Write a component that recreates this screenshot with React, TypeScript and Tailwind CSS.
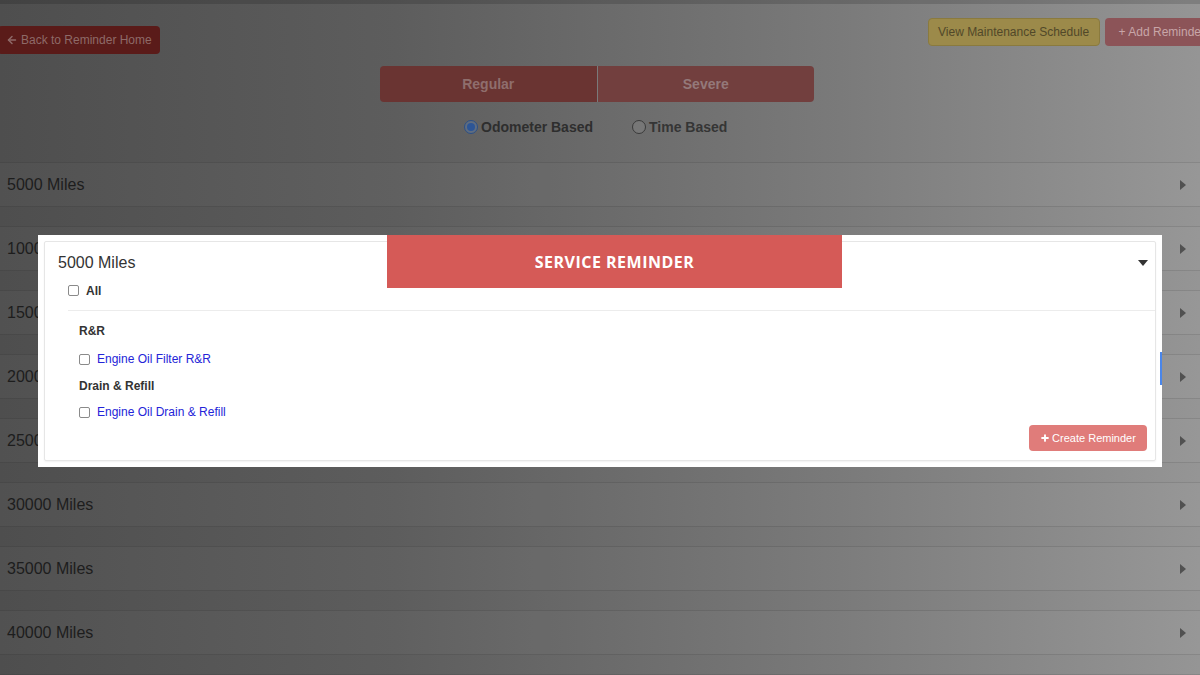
import { ArrowLeft, Plus } from "lucide-react"

const rows = ["5000", "10000", "15000", "20000", "25000", "30000", "35000", "40000"]

function Box({ className = "" }: { className?: string }) {
  return <span className={`inline-block w-[11px] h-[11px] rounded-[2px] border border-[#8a8a8a] bg-white ${className}`} />
}

function CaretRight() {
  return (
    <svg width="6" height="10" viewBox="0 0 6 10">
      <path d="M0 0 L6 5 L0 10 Z" fill="#3a3a3a" fillOpacity="0.75" />
    </svg>
  )
}

export default function App() {
  return (
    <div className="relative w-[1200px] h-[675px] overflow-hidden bg-[linear-gradient(90deg,#4e4e4e_0%,#5d5d5d_33%,#7a7a7a_70%,#959595_100%)] font-['Liberation_Sans',Arial,sans-serif]">
      {/* dimmed page behind the modal */}
      <div className="h-[4px] bg-black/15" />
      <div className="flex items-start justify-between pt-[14px]">
        <button className="mt-[8px] ml-[-2px] h-[28px] px-[8px] flex items-center gap-[3px] rounded-[4px] bg-[#5a1b19] text-[12px] text-[#8e6a68]">
          <ArrowLeft size={12} strokeWidth={3} />
          Back to Reminder Home
        </button>
        <div className="flex gap-[5px] mr-[-19px]">
          <button className="h-[28px] w-[172px] rounded-[4px] border border-[#8a7a3e] bg-[#9c8a4a] text-[12px] text-[#514829]">
            View Maintenance Schedule
          </button>
          <button className="h-[28px] px-[14px] rounded-[4px] bg-[#8c5458] text-[12px] text-[#c8a6a8]">
            + Add Reminder
          </button>
        </div>
      </div>

      <div className="ml-[380px] mt-[12px] flex w-[434px] h-[36px] rounded-[4px] overflow-hidden">
        <div className="flex-1 flex items-center justify-center bg-[#6a3432] text-[14px] font-bold text-[#8f6e6d]">
          Regular
        </div>
        <div className="w-[1px] bg-[#7a7a7a]" />
        <div className="flex-1 flex items-center justify-center bg-[#723f3e] text-[14px] font-bold text-[#94797a]">
          Severe
        </div>
      </div>

      <div className="mt-[15px] h-[20px] flex items-center ml-[464px] text-[14px] font-bold text-[#2e2e2e]">
        <span className="w-[14px] h-[14px] rounded-full border border-[#2c4f86] bg-[#5f6d80] flex items-center justify-center">
          <span className="w-[8px] h-[8px] rounded-full bg-[#2c5596]" />
        </span>
        <span className="ml-[3px]">Odometer Based</span>
        <span className="ml-[39px] w-[14px] h-[14px] rounded-full border border-[#3a3a3a] bg-[#777]" />
        <span className="ml-[3px] text-[#353535]">Time Based</span>
      </div>

      <div className="mt-[25px] flex flex-col gap-[19px]">
        {rows.map((r) => (
          <div
            key={r}
            className="h-[45px] flex items-center justify-between pl-[7px] pr-[14px] border-y border-black/10 bg-white/[0.02] text-[16px] text-[#1d1d1d]">
            <span>{r} Miles</span>
            <CaretRight />
          </div>
        ))}
        <div className="h-[45px] border-y border-black/10 bg-white/[0.02]" />
      </div>

      {/* modal */}
      <div className="absolute left-[38px] top-[235px] w-[1124px] h-[232px] bg-white p-[6px]">
        <div className="h-full rounded-[2px] border border-[#e6e6e6] shadow-[0_1px_2px_rgba(0,0,0,0.06)]">
          <div className="flex items-center justify-between pl-[13px] pr-[7px] pt-[10px] h-[31px]">
            <span className="text-[16px] text-[#333]">5000 Miles</span>
            <svg width="10" height="6" viewBox="0 0 10 6">
              <path d="M0 0 H10 L5 6 Z" fill="#333" />
            </svg>
          </div>
          <div className="ml-[23px] mt-[7px] h-[21px] flex items-center gap-[7px] text-[12px] font-bold text-[#333]">
            <Box />
            All
          </div>
          <div className="ml-[23px] mt-[9px] border-t border-[#ececec]" />
          <div className="ml-[34px] pt-[13px] text-[12px] text-[#333]">
            <div className="h-[14px] font-bold leading-[14px]">R&amp;R</div>
            <div className="mt-[14px] h-[14px] flex items-center gap-[7px]">
              <Box />
              <span className="text-[#2424d8]">Engine Oil Filter R&amp;R</span>
            </div>
            <div className="mt-[13px] h-[14px] font-bold leading-[14px]">Drain &amp; Refill</div>
            <div className="mt-[12px] h-[14px] flex items-center gap-[7px]">
              <Box />
              <span className="text-[#2424d8]">Engine Oil Drain &amp; Refill</span>
            </div>
          </div>
          <div className="flex justify-end pr-[8px] mt-[6px]">
            <button className="h-[26px] w-[118px] rounded-[4px] bg-[#e07c7a] flex items-center justify-center gap-[2px] text-[11px] text-white">
              <Plus size={10} strokeWidth={4.5} />
              Create Reminder
            </button>
          </div>
        </div>
        <div className="absolute right-0 top-[117px] w-[2px] h-[33px] bg-[#4a86ea]" />
        <div className="absolute left-[349px] top-0 w-[455px] h-[53px] bg-[#d55a57] flex items-center justify-center text-[16px] font-bold tracking-[0.5px] text-white font-['Open_Sans',sans-serif]">
          SERVICE REMINDER
        </div>
      </div>
    </div>
  )
}
